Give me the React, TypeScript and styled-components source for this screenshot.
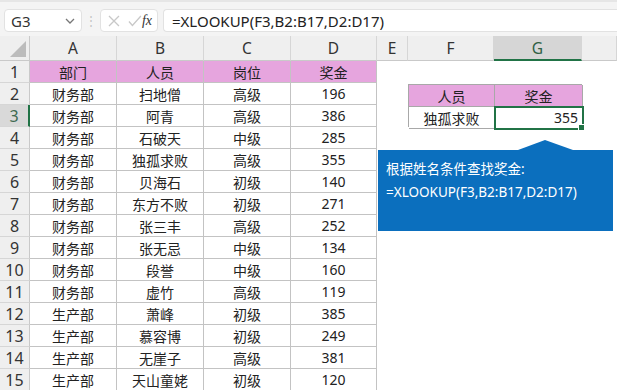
import styled, { createGlobalStyle } from "styled-components";

const GlobalStyle = createGlobalStyle`
  html, body {
    margin: 0;
    padding: 0;
    background: #fff;
  }
  body {
    font-family: "Noto Sans", "Noto Sans CJK SC", sans-serif;
    color: #222;
  }
`;

const cjk = `"Noto Sans", "Noto Sans CJK SC", sans-serif`;

const Page = styled.div`
  width: 640px;
  height: 390px;
  overflow: hidden;
`;

const Main = styled.div`
  width: 617px;
`;

const FormulaBar = styled.div`
  height: 36px;
  box-sizing: border-box;
  padding: 7px 0 4px 4px;
  display: flex;
  align-items: stretch;
  gap: 5px;
  background: #f4f4f4;
  border-top: 2px solid #e6e6e6;
`;

const Box = styled.div`
  background: #fff;
  border: 1px solid #e2e2e2;
  border-radius: 4px;
  display: flex;
  align-items: center;
  box-sizing: border-box;
`;

const NameBox = styled(Box)`
  width: 78px;
  padding: 0 6px;
  justify-content: space-between;
  font-family: ${cjk};
  font-size: 15px;
  color: #333;
`;

const Grip = styled.div`
  width: 8px;
  display: flex;
  align-items: center;
  justify-content: center;
  color: #c4c4c4;
  font-size: 12px;
`;

const FxBox = styled(Box)`
  width: 58px;
  padding: 0 5px 0 7px;
  justify-content: space-between;
`;

const FxLabel = styled.span`
  font-family: "Liberation Serif", serif;
  font-style: italic;
  font-size: 14px;
  color: #333;
`;

const FormulaInput = styled(Box)`
  flex: 1;
  padding: 0 8px;
  font-family: ${cjk};
  font-size: 15px;
  color: #222;
  border-right: none;
  border-radius: 4px 0 0 4px;
`;

const Sheet = styled.div`
  position: relative;
  display: grid;
  grid-template-columns: 30px 87px 87px 87px 86px 31px 86px 88px 35px;
  grid-template-rows: 25px repeat(15, 22px);
`;

const Corner = styled.div`
  background: #efefef;
  border-right: 1px solid #c9c9c9;
  border-bottom: 1px solid #c9c9c9;
  display: flex;
  align-items: flex-end;
  justify-content: flex-end;
  padding: 0 3px 3px 0;
  box-sizing: border-box;
`;

const ColHead = styled.div<{ $active?: boolean }>`
  background: ${(p) => (p.$active ? "#d6d6d6" : "#efefef")};
  color: ${(p) => (p.$active ? "#2f5f44" : "#333")};
  border-right: 1px solid #d6d6d6;
  border-bottom: ${(p) => (p.$active ? "2px solid #217346" : "1px solid #c9c9c9")};
  box-sizing: border-box;
  display: flex;
  align-items: center;
  justify-content: center;
  font-family: ${cjk};
  font-size: 15.5px;
`;

const RowHead = styled.div<{ $active?: boolean }>`
  background: ${(p) => (p.$active ? "#d9d9d9" : "#efefef")};
  color: ${(p) => (p.$active ? "#3d6a50" : "#333")};
  border-right: ${(p) => (p.$active ? "2px solid #217346" : "1px solid #c9c9c9")};
  border-bottom: 1px solid #d6d6d6;
  box-sizing: border-box;
  display: flex;
  align-items: center;
  justify-content: center;
  font-family: ${cjk};
  font-size: 16px;
`;

const Cell = styled.div<{ $head?: boolean }>`
  background: ${(p) => (p.$head ? "#e6a5de" : "#fff")};
  border-right: 1px solid #c3c3c3;
  border-bottom: 1px solid #c3c3c3;
  box-sizing: border-box;
  display: flex;
  align-items: center;
  justify-content: center;
  font-family: ${cjk};
  font-size: 14px;
  color: #222;
`;

const Blank = styled.div`
  background: #fff;
`;

const Lookup = styled.div`
  grid-column: 7 / 9;
  grid-row: 3 / 5;
  display: grid;
  grid-template-columns: 86px 88px;
  grid-template-rows: 22px 22px;
  margin-top: 1px;
  border-top: 1px solid #a8a8a8;
  border-left: 1px solid #a8a8a8;
  box-sizing: border-box;
`;

const LookupCell = styled.div<{ $head?: boolean; $right?: boolean; $selected?: boolean }>`
  position: relative;
  background: ${(p) => (p.$head ? "#e6a5de" : "#fff")};
  border-right: 1px solid #a8a8a8;
  border-bottom: 1px solid #a8a8a8;
  box-sizing: border-box;
  display: flex;
  align-items: center;
  justify-content: ${(p) => (p.$right ? "flex-end" : "center")};
  padding: 0 4px;
  font-family: ${cjk};
  font-size: 14px;
  color: #222;
  ${(p) =>
    p.$selected &&
    `
    outline: 2px solid #217346;
    outline-offset: -1px;
  `}
`;

const FillHandle = styled.span`
  position: absolute;
  right: -3px;
  bottom: -3px;
  width: 5px;
  height: 5px;
  background: #217346;
  border: 1px solid #fff;
`;

const Callout = styled.div`
  position: absolute;
  left: 378px;
  top: 114px;
  width: 235px;
  height: 81px;
  box-sizing: border-box;
  background: #0b6fbe;
  color: #fff;
  padding: 8px 8px;
  font-family: ${cjk};
  font-size: 13.5px;
  line-height: 23px;
  &::before {
    content: "";
    position: absolute;
    top: -10px;
    left: 140px;
    border-left: 27px solid transparent;
    border-right: 28px solid transparent;
    border-bottom: 10px solid #0b6fbe;
  }
`;

const CalloutLine = styled.div`
  white-space: nowrap;
`;

const rows: [string, string, string, number][] = [
  ["财务部", "扫地僧", "高级", 196],
  ["财务部", "阿青", "高级", 386],
  ["财务部", "石破天", "中级", 285],
  ["财务部", "独孤求败", "高级", 355],
  ["财务部", "贝海石", "初级", 140],
  ["财务部", "东方不败", "初级", 271],
  ["财务部", "张三丰", "高级", 252],
  ["财务部", "张无忌", "中级", 134],
  ["财务部", "段誉", "中级", 160],
  ["财务部", "虚竹", "高级", 119],
  ["生产部", "萧峰", "初级", 385],
  ["生产部", "慕容博", "初级", 249],
  ["生产部", "无崖子", "高级", 381],
  ["生产部", "天山童姥", "初级", 120],
];

const columns = ["A", "B", "C", "D", "E", "F", "G", ""];
const formula = "=XLOOKUP(F3,B2:B17,D2:D17)";

function Chevron() {
  return (
    <svg width="10" height="6" viewBox="0 0 10 6" fill="none" stroke="#777" strokeWidth="1.3">
      <path d="M1 1l4 4 4-4" />
    </svg>
  );
}

function CrossCheck() {
  return (
    <svg width="34" height="12" viewBox="0 0 34 12" fill="none" stroke="#c8c8c8" strokeWidth="1.3">
      <path d="M1 1l10 10M11 1L1 11" />
      <path d="M21 6.5l3.5 4L33 1" />
    </svg>
  );
}

function SelectAll() {
  return (
    <svg width="16" height="16" viewBox="0 0 16 16">
      <polygon points="16,0 16,16 0,16" fill="#bcbcbc" />
    </svg>
  );
}

export default function App() {
  return (
    <Page>
      <GlobalStyle />
      <Main>
        <FormulaBar>
          <NameBox>
            G3
            <Chevron />
          </NameBox>
          <Grip>⋮</Grip>
          <FxBox>
            <CrossCheck />
            <FxLabel>fx</FxLabel>
          </FxBox>
          <FormulaInput>{formula}</FormulaInput>
        </FormulaBar>
        <Sheet>
          <Corner>
            <SelectAll />
          </Corner>
          {columns.map((c, i) => (
            <ColHead key={i} $active={c === "G"}>
              {c}
            </ColHead>
          ))}

          <RowHead>1</RowHead>
          <Cell $head>部门</Cell>
          <Cell $head>人员</Cell>
          <Cell $head>岗位</Cell>
          <Cell $head>奖金</Cell>
          <Blank />
          <Blank />
          <Blank />
          <Blank />

          {rows.map((r, i) => {
            const n = i + 2;
            const inLookup = n === 2 || n === 3;
            return [
              <RowHead key={`h${n}`} $active={n === 3}>
                {n}
              </RowHead>,
              <Cell key={`a${n}`}>{r[0]}</Cell>,
              <Cell key={`b${n}`}>{r[1]}</Cell>,
              <Cell key={`c${n}`}>{r[2]}</Cell>,
              <Cell key={`d${n}`}>{r[3]}</Cell>,
              <Blank key={`e${n}`} />,
              ...(inLookup ? [] : [<Blank key={`f${n}`} />, <Blank key={`g${n}`} />]),
              <Blank key={`x${n}`} />,
            ];
          })}

          <Lookup>
            <LookupCell $head>人员</LookupCell>
            <LookupCell $head>奖金</LookupCell>
            <LookupCell>独孤求败</LookupCell>
            <LookupCell $right $selected>
              355
              <FillHandle />
            </LookupCell>
          </Lookup>

          <Callout>
            <CalloutLine>根据姓名条件查找奖金:</CalloutLine>
            <CalloutLine>{formula}</CalloutLine>
          </Callout>
        </Sheet>
      </Main>
    </Page>
  );
}
